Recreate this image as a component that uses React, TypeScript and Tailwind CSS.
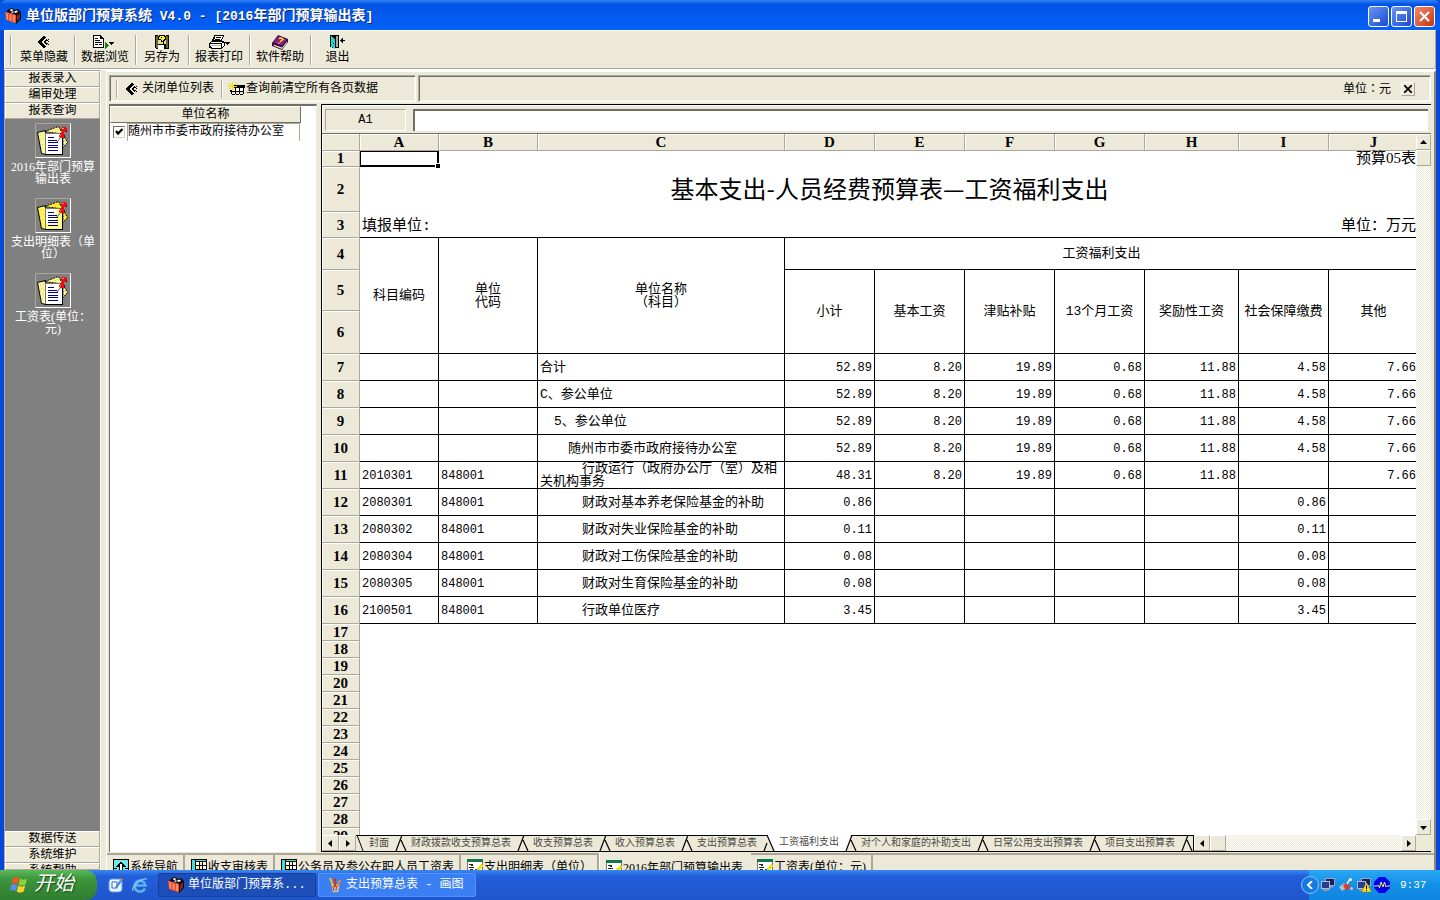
import { ReactNode } from 'react';
import clsx from 'clsx';

type IconProps = { className?: string };

type SheetRow = {
    code: string;
    unit: string;
    name: string;
    indent: string;
    values: string[];
};

const raised =
    'border border-t-white border-l-white border-r-[#aca899] border-b-[#aca899] bg-[#ece9d8]';
const sunken =
    'border border-t-[#aca899] border-l-[#aca899] border-r-white border-b-white';
const track =
    'bg-[repeating-conic-gradient(#ffffff_0_25%,#ece9d8_0_50%)] bg-[size:2px_2px]';
const stripFrame =
    'border border-t-[#aca899] border-l-[#aca899] border-r-white border-b-white shadow-[inset_1px_1px_0_#716f64,inset_-1px_-1px_0_#f6f4ea]';

const full = ['52.89', '8.20', '19.89', '0.68', '11.88', '4.58', '7.66'];

const rows: SheetRow[] = [
    { code: '', unit: '', name: '合计', indent: 'indent-0', values: full },
    { code: '', unit: '', name: 'C、参公单位', indent: 'indent-0', values: full },
    { code: '', unit: '', name: '5、参公单位', indent: 'indent-[14px]', values: full },
    { code: '', unit: '', name: '随州市市委市政府接待办公室', indent: 'indent-[28px]', values: full },
    {
        code: '2010301',
        unit: '848001',
        name: '行政运行（政府办公厅（室）及相关机构事务',
        indent: 'indent-[42px]',
        values: ['48.31', '8.20', '19.89', '0.68', '11.88', '', '7.66'],
    },
    {
        code: '2080301',
        unit: '848001',
        name: '财政对基本养老保险基金的补助',
        indent: 'indent-[42px]',
        values: ['0.86', '', '', '', '', '0.86', ''],
    },
    {
        code: '2080302',
        unit: '848001',
        name: '财政对失业保险基金的补助',
        indent: 'indent-[42px]',
        values: ['0.11', '', '', '', '', '0.11', ''],
    },
    {
        code: '2080304',
        unit: '848001',
        name: '财政对工伤保险基金的补助',
        indent: 'indent-[42px]',
        values: ['0.08', '', '', '', '', '0.08', ''],
    },
    {
        code: '2080305',
        unit: '848001',
        name: '财政对生育保险基金的补助',
        indent: 'indent-[42px]',
        values: ['0.08', '', '', '', '', '0.08', ''],
    },
    {
        code: '2100501',
        unit: '848001',
        name: '行政单位医疗',
        indent: 'indent-[42px]',
        values: ['3.45', '', '', '', '', '3.45', ''],
    },
];

const emptyRows = [17, 18, 19, 20, 21, 22, 23, 24, 25, 26, 27, 28, 29];
const columns = ['A', 'B', 'C', 'D', 'E', 'F', 'G', 'H', 'I', 'J'];
const payHeads = ['小计', '基本工资', '津贴补贴', '13个月工资', '奖励性工资', '社会保障缴费', '其他'];
const sheetTabs = [
    '封面',
    '财政拨款收支预算总表',
    '收支预算总表',
    '收入预算总表',
    '支出预算总表',
    '工资福利支出',
    '对个人和家庭的补助支出',
    '日常公用支出预算表',
    '项目支出预算表',
];
const activeSheet = 5;

/* ---------- icons ---------- */

const BookCaseIcon = ({ className }: IconProps) => (
    <svg viewBox="0 0 16 16" className={className}>
        <path d="M4 1l3-1 3 2 3-1 3 3v7l-5 5-1-1V6L1 4z" fill="#120806" />
        <path d="M4.500 2l2-1 2 1-2 1.200zM9 3.500l3-1 1 1.500-3 1zM6 4l2-.800 1 1-2 .800z" fill="#fff" />
        <path d="M0 3.500l11 3.500v8.500L1 12z" fill="#e4512e" />
        <path d="M1 4.800l2 .700v6.500l-1.500-.500zM4.500 6l2 .700v6.500L4.500 12.500zM8 7l2 .700v6.500l-2-.700z" fill="#ff8a64" />
        <path d="M12 8l3-3v5l-3 4z" fill="#8c2413" />
    </svg>
);

const CollapseIcon = ({ className }: IconProps) => (
    <svg viewBox="0 0 12 12" className={className} shapeRendering="crispEdges">
        <path d="M5 0h2v1h1v1H7v1H6v1H5v1H4v2h1v1h1v1h1v1h1v1H7v1H5v-1H4v-1H3V9H2V8H1V7H0V5h1V4h1V3h1V2h1V1h1z" fill="#000" />
        <path d="M8 3h1v1h1v1H8v2h2v1H9v1H8V8H7V7H6V5h1V4h1zM10 3h1v1h-1zM10 5h1v1h-1zM10 8h1v1h-1z" fill="#000" />
    </svg>
);

const BrowseIcon = ({ className }: IconProps) => (
    <svg viewBox="0 0 24 16" className={className} shapeRendering="crispEdges">
        <path d="M0 1h8v1h1v1h1v1h1v10H0z" fill="#000" />
        <path d="M1 2h6v3h3v8H1z" fill="#fff" />
        <path d="M8 3h1v1H8zM2 4h3v1H2zM2 6h5v1H2zM2 8h7v1H2zM2 10h3v1H2zM6 10h3v1H6z" fill="#000" />
        <path d="M12 8h1v1h1v1h1v1h1v1h-1v1h-1v1h-1v1h-1z" fill="#0a8a12" />
        <path d="M16 8h5v1h-1v1h-1v1h-1v-1h-1V9h-1z" fill="#000" />
    </svg>
);

const SaveAsIcon = ({ className }: IconProps) => (
    <svg viewBox="0 0 14 14" className={className} shapeRendering="crispEdges">
        <path d="M0 0h14v14H1l-1-1z" fill="#000" />
        <path d="M1 1h2v12H1zM11 1h2v12h-2z" fill="#6d6d22" />
        <path d="M3 0h8v9H3z" fill="#d8d8c0" />
        <path d="M4 0h6v1h1v4h-1v1H9v3H6V5h1V4h1V3H6v2H3V1h1z" fill="#000" />
        <path d="M5 1h4v1h1v2H9v1H8v1H7V4h1V3H7V2H6v2H4V2h1z" fill="#ffee00" />
        <path d="M3 10h6v4H3z" fill="#fff" />
        <path d="M6 7h2v2H6z" fill="#ffee00" />
    </svg>
);

const PrinterIcon = ({ className }: IconProps) => (
    <svg viewBox="0 0 21 14" className={className} shapeRendering="crispEdges">
        <path d="M5 0h10v2h-1v2h-1v2H3V4h1V2h1z" fill="#000" />
        <path d="M6 1h8v1h-1v2h-1v1H5V4h1z" fill="#fff" />
        <path d="M7 2h5v1H7zM6 4h5v1H6z" fill="#000" />
        <path d="M2 6h13v1h1v4h-1v1h-1v1h-1v1H2v-1H0V8h1V7h1z" fill="#000" />
        <path d="M3 7h10v1H2V7zM1 9h11v1H1zM13 8h2v3h-1v1h-1zM2 11h10v2H3z" fill="#fff" />
        <path d="M1 10h11v1H1z" fill="#b8b8b0" />
        <path d="M9 10h2v1H9z" fill="#d8c800" />
        <path d="M15 7h6v1h-1v1h-1v1h-1V9h-1V8h-2z" fill="#000" />
    </svg>
);

const BookIcon = ({ className }: IconProps) => (
    <svg viewBox="0 0 16 15" className={className}>
        <path d="M6 0l10 4v3l-6 8-10-4V8z" fill="#30082f" />
        <path d="M6 1l9 3.500-5 6L1 7.500z" fill="#8b1b8b" />
        <path d="M1.500 9.500l8.500 3 5-6v1.500l-5 6-8-3z" fill="#e8dce8" />
        <path d="M7 3.500l2.500-.500 1.500 1.500L9 6 8 7" fill="none" stroke="#ffe800" strokeWidth="1.400" />
        <path d="M6 7.500h1.500v1.200H6z" fill="#ffe800" />
    </svg>
);

const ExitIcon = ({ className }: IconProps) => (
    <svg viewBox="0 0 15 14" className={className} shapeRendering="crispEdges">
        <path d="M0 0h9v13H0z" fill="#000" />
        <path d="M6 1h2v11H6z" fill="#a8a89c" />
        <path d="M1 1h1v1h1v1h1v1h1v10H4v-1H3v-1H1z" fill="#20d4dc" />
        <path d="M0 12h2v2H0z" fill="#ece9d8" />
        <path d="M3 8h1v1H3z" fill="#000" />
        <path d="M10 5h5v1h-5zM11 4h1v3h-1zM12 3h1v5h-1z" fill="#000" />
    </svg>
);

const ClearIcon = ({ className }: IconProps) => (
    <svg viewBox="0 0 17 14" className={className} shapeRendering="crispEdges">
        <path d="M6 3h11v3H6zM2 8h2v1H2zM3 13h13v-1H3zM2 9h14v1H2zM7 6h1v7H7zM11 6h1v7h-1zM15 6h1v7h-1zM3 8h1v5H3z" fill="#000" />
        <path d="M8 6h3v3H8zM12 6h3v3h-3z" fill="#fff" />
        <path d="M4 0h1v3H4zM0 1h1v1H0zM1 2h2v1H1zM3 3h3v2H3zM6 2h2v1H6zM8 1h1v1H8zM0 4h3v1H0zM6 4h3v1H6zM4 5h1v3H4zM1 6h2v1H1z" fill="#e8e000" />
    </svg>
);

const NotesIcon = ({ yellow, className }: IconProps & { yellow?: boolean }) => (
    <svg viewBox="0 0 32 30" className={className}>
        <path d="M.500 6.500l8-2 1 24-5-1z" fill={yellow ? '#fff45a' : '#fbf6a6'} stroke="#000" />
        <path d="M7.500 5.500l14-5 9 16-4.500 5V8z" fill={yellow ? '#ffee30' : '#fbf6a6'} stroke="#000" strokeDasharray="2 1" />
        <path
            d="M3 9h1v1H3zM4 12h1v1H4zM3 15h1v1H3zM5 18h1v1H5zM5 22h1v1H5zM12 5h1v1h-1zM15 3h1v1h-1zM18 4h1v1h-1zM27 14h1v1h-1zM20 3h1v1h-1zM6 8h1v1H6zM6 13h1v1H6z"
            fill="#e6d800"
        />
        <path d="M8 7h18v22H8z" fill="#000" />
        <path d="M8 7h17v21H8z" fill="#777" />
        <path d="M9 8h16v20H9z" fill={yellow ? '#ffff8c' : '#fff'} />
        <path d="M9 8h10v14H9z" fill="#fff" />
        <path d="M11 11h6v1h-6zM11 14h9v1h-9zM11 16h10v1H11zM11 19h10v1H11zM11 21h10v1H11zM11 24h10v1H11z" fill="#00008c" shapeRendering="crispEdges" />
        <path d="M20 16l4-5" stroke="#555" />
        <path d="M25 1h4v1h1v3h-1v1h-2v3h1v2h-1v1h-4v-1h-1V9h1V7h2V5h-1V2h1z" fill="#e81010" shapeRendering="crispEdges" />
        <path d="M25 2h2v1h-2zM23 9h1v1h-1z" fill="#ff9a9a" />
        <path d="M29 4h1v2h-1zM27 9h1v2h-1z" fill="#7a0000" />
    </svg>
);

const NavDocIcon = ({ className }: IconProps) => (
    <svg viewBox="0 0 16 12" className={className} shapeRendering="crispEdges">
        <path d="M0 0h16v12H0z" fill="#000" />
        <path d="M1 1h14v11H1z" fill="#6fe8ea" />
        <path d="M8 3h1v1h1v1h1v1h1v1h1v1h-3v4H6V8H3V7h1V6h1V5h1V4h1V3z" fill="#000" />
        <path d="M7 5h2v7H7z" fill="#fff" />
        <path d="M1 9h3v1H1zM12 9h3v1h-3z" fill="#000" />
    </svg>
);

const GridDocIcon = ({ className }: IconProps) => (
    <svg viewBox="0 0 16 12" className={className} shapeRendering="crispEdges">
        <path d="M0 0h16v12H0z" fill="#000" />
        <path d="M1 1h3v11H1zM5 1h10v1H5z" fill="#3fe0e4" />
        <path d="M5 3h3v3H5zM9 3h2v3H9zM12 3h3v3h-3zM5 7h3v3H5zM9 7h2v3H9zM12 7h3v3h-3z" fill="#fff" />
        <path d="M9 3h2v3H9zM5 7h3v3H5z" fill="#ffee88" />
    </svg>
);

const FormDocIcon = ({ className }: IconProps) => (
    <svg viewBox="0 0 16 12" className={className} shapeRendering="crispEdges">
        <path d="M0 0h16v12H0z" fill="#777" />
        <path d="M1 3h14v9H1z" fill="#fff" />
        <path d="M0 0h16v3H0z" fill="#12784c" />
        <path d="M2 5h4v1H2zM4 6h2v1H4zM2 8h5v1H2zM3 10h3v1H3z" fill="#222" />
        <path d="M9 11l5-6 2 2-4 5z" fill="#f2e400" />
        <path d="M8 10h2v2H8z" fill="#2255dd" />
    </svg>
);

const WindowsFlag = ({ className }: IconProps) => (
    <svg viewBox="0 0 20 18" className={className}>
        <path d="M3 2c2-1.500 4-1.500 6 0L7.500 8c-2-1.500-4-1.500-6 0z" fill="#f0562a" />
        <path d="M10 2.500c2 1.500 4.500 1.500 7 0L15.500 8.500c-2.500 1.500-5 1.500-7 0z" fill="#8fd03c" />
        <path d="M1.300 9c2-1.500 4-1.500 6 0L5.800 15c-2-1.500-4-1.500-6 0z" fill="#5b8df0" />
        <path d="M8.200 9.500c2 1.500 4.500 1.500 7 0l-1.500 6c-2.500 1.500-5 1.500-7 0z" fill="#fbd22e" />
    </svg>
);

const ShowDesktopIcon = ({ className }: IconProps) => (
    <svg viewBox="0 0 16 16" className={className}>
        <rect x="1" y="2" width="13" height="13" rx="3" fill="#e9f3fd" stroke="#5ba0e8" />
        <path d="M4 5h5v6H4z" fill="#fff" stroke="#2a6cc8" />
        <path d="M7 10l5-7 2 1-5 7z" fill="#3d8be8" />
        <path d="M12 3l1-2 2 1-1 2z" fill="#f07828" />
    </svg>
);

const IeIcon = ({ className }: IconProps) => (
    <svg viewBox="0 0 16 16" className={className}>
        <path d="M13 11.500A5.500 5.500 0 1 1 13.500 8.500H4" fill="none" stroke="#5ab4f4" strokeWidth="2.600" />
        <path d="M1 14C-1 11 8 1 15 2" fill="none" stroke="#8ccaf8" strokeWidth="1.200" />
    </svg>
);

const PaintIcon = ({ className }: IconProps) => (
    <svg viewBox="0 0 14 16" className={className}>
        <path d="M3 7h9l-1.500 8.500h-6z" fill="#b9c6d4" stroke="#5c6c80" strokeWidth="0.500" />
        <path d="M5 9l-3-8" stroke="#f0c030" strokeWidth="2" />
        <path d="M7 10L7 1" stroke="#c83820" strokeWidth="2" />
        <path d="M9 10l3-7" stroke="#e88428" strokeWidth="2" />
        <path d="M5 9l1 5M8.500 9L8 14" stroke="#c83820" />
    </svg>
);

const MonitorsIcon = ({ warn, className }: IconProps & { warn?: boolean }) => (
    <svg viewBox="0 0 16 16" className={className}>
        <rect x="5.500" y="1.500" width="9" height="7" fill="#16205c" stroke="#9aa4c4" />
        <rect x="1.500" y="4.500" width="8" height="7" fill="#2c3c90" stroke="#b4bcd4" />
        <path d="M3 12h6v2H3zM10 9h3v2h-3z" fill="#8c94b0" />
        {warn && (
            <>
                <path d="M10.500 5.500l5 9.500h-10z" fill="#ffdf1c" stroke="#8a7000" strokeWidth="0.500" />
                <path d="M10 8.500h1v3.500h-1zM10 13h1v1h-1z" fill="#000" />
            </>
        )}
    </svg>
);

const SatelliteIcon = ({ className }: IconProps) => (
    <svg viewBox="0 0 16 16" className={className}>
        <path d="M1 10l5-4 3 5-5 3z" fill="#b8bcc8" />
        <path d="M5 8l5-2 2 4-4 4z" fill="#d8402c" />
        <path d="M9 7l3-5" stroke="#eee" strokeWidth="1.500" />
        <circle cx="12.500" cy="2.500" r="1.500" fill="#fff" />
        <circle cx="13.500" cy="11.500" r="1.500" fill="#ffb0a0" />
    </svg>
);

const WaveIcon = ({ className }: IconProps) => (
    <svg viewBox="0 0 16 16" className={className}>
        <path d="M5 0h6l5 5v6l-5 5H5l-5-5V5z" fill="#0000f0" />
        <path d="M0 9h3.500l1-1 1 3 1.500-6 2 5 1.500-5 1.500 5 1-1H16" fill="none" stroke="#f0f060" />
    </svg>
);

const Arrow = ({ dir }: { dir: 'left' | 'right' | 'up' | 'down' }) => {
    const paths = {
        left: 'M6 1v7L2 4.500z',
        right: 'M3 1v7l4-3.500z',
        up: 'M1 6h7L4.500 2z',
        down: 'M1 3h7L4.500 7z',
    };
    return (
        <svg viewBox="0 0 9 9" className="h-[9px] w-[9px]">
            <path d={paths[dir]} fill="#000" />
        </svg>
    );
};

/* ---------- chrome ---------- */

const ScrollButton = ({ dir, className }: { dir: 'left' | 'right' | 'up' | 'down'; className: string }) => (
    <button
        type="button"
        aria-label={dir}
        className={clsx('flex shrink-0 items-center justify-center', raised, className)}
    >
        <Arrow dir={dir} />
    </button>
);

const TitleBar = () => (
    <header className="flex h-[30px] shrink-0 items-center justify-between rounded-t-md bg-linear-to-b from-[#2f80f8] via-[#0054e3] via-15% to-[#0560f8] pr-[5px] pl-[5px]">
        <div className="flex items-center gap-[5px] pt-[2px]">
            <BookCaseIcon className="h-4 w-4" />
            <h1 className="text-sm leading-4 font-bold whitespace-pre text-white [text-shadow:1px_1px_0_#0a2a80]">
                单位版部门预算系统<span className="text-[13px]"> V4.0 - [2016</span>年部门预算输出表<span className="text-[13px]">]</span>
            </h1>
        </div>
        <div className="flex gap-[2px] pt-[3px]">
            <button type="button" aria-label="最小化" className="flex h-[21px] w-[21px] items-end rounded-[3px] border border-white bg-linear-to-br from-[#6b94f4] to-[#1c48d0] p-1">
                <span className="h-[3px] w-[7px] bg-white" />
            </button>
            <button type="button" aria-label="最大化" className="flex h-[21px] w-[21px] items-center justify-center rounded-[3px] border border-white bg-linear-to-br from-[#6b94f4] to-[#1c48d0]">
                <span className="h-[11px] w-[11px] border border-t-[3px] border-white" />
            </button>
            <button type="button" aria-label="关闭" className="flex h-[21px] w-[21px] items-center justify-center rounded-[3px] border border-white bg-linear-to-br from-[#f08868] to-[#c83008]">
                <svg viewBox="0 0 11 11" className="h-[11px] w-[11px]">
                    <path d="M1 1l9 9M10 1l-9 9" stroke="#fff" strokeWidth="2.200" />
                </svg>
            </button>
        </div>
    </header>
);

const ToolButton = ({ icon, label, width, last }: { icon: ReactNode; label: string; width: string; last?: boolean }) => (
    <button
        type="button"
        className={clsx('flex h-[30px] flex-col items-center justify-between', width, !last && 'border-r border-[#aca899] shadow-[1px_0_0_#fff]')}
    >
        <span className="flex h-[15px] items-center">{icon}</span>
        <span className="leading-[14px]">{label}</span>
    </button>
);

const Toolbar = () => (
    <div className="flex h-[39px] shrink-0 items-center border border-t-white border-r-[#aca899] border-b-[#aca899] border-l-white pl-[5px]">
        <div className="mr-[2px] h-[30px] w-[2px] border-l border-[#aca899] bg-white" />
        <ToolButton width="w-[61px]" label="菜单隐藏" icon={<CollapseIcon className="h-3 w-3" />} />
        <ToolButton width="w-[61px]" label="数据浏览" icon={<BrowseIcon className="h-4 w-6" />} />
        <ToolButton width="w-[53px]" label="另存为" icon={<SaveAsIcon className="h-[14px] w-[14px]" />} />
        <ToolButton width="w-[61px]" label="报表打印" icon={<PrinterIcon className="h-[14px] w-[21px]" />} />
        <ToolButton width="w-[61px]" label="软件帮助" icon={<BookIcon className="h-[15px] w-4" />} />
        <ToolButton width="w-[53px]" label="退出" last icon={<ExitIcon className="h-[14px] w-[15px]" />} />
    </div>
);

const SideHeader = ({ label, className }: { label: string; className?: string }) => (
    <button type="button" className={clsx('block w-full shrink-0 overflow-hidden text-center leading-[15px]', raised, className ?? 'h-4')}>
        {label}
    </button>
);

const SideItem = ({ lines, yellow }: { lines: string[]; yellow?: boolean }) => (
    <button type="button" className="flex h-[75px] w-full shrink-0 flex-col items-center gap-[3px] pl-px text-white">
        <span className={clsx('flex h-[35px] w-9 items-center justify-center', sunken)}>
            <NotesIcon yellow={yellow} className="h-[30px] w-8" />
        </span>
        <span className="font-['Liberation_Serif','Noto_Sans_CJK_SC',serif] leading-3">
            {lines.map((line) => (
                <span key={line} className="block whitespace-nowrap">{line}</span>
            ))}
        </span>
    </button>
);

const Sidebar = () => (
    <nav className="flex w-[97px] shrink-0 flex-col border-t border-r border-l border-t-[#aca899] border-r-white border-l-[#aca899] bg-[#808080]">
        <SideHeader label="报表录入" />
        <SideHeader label="编审处理" />
        <SideHeader label="报表查询" />
        <div className="flex min-h-0 flex-1 flex-col overflow-hidden pt-1">
            <SideItem lines={['2016年部门预算', '输出表']} />
            <SideItem lines={['支出明细表（单', '位）']} yellow />
            <SideItem lines={['工资表(单位：', '元)']} />
        </div>
        <SideHeader label="数据传送" />
        <SideHeader label="系统维护" />
        <SideHeader label="系统帮助" className="h-[7px]" />
    </nav>
);

const FilterStrip = () => (
    <div className="flex h-[27px] shrink-0 gap-[2px]">
        <div className={clsx('flex w-[307px] items-center pl-[6px]', stripFrame)}>
            <div className="h-[18px] w-[2px] border-l border-[#aca899] bg-white" />
            <button type="button" className="flex h-[18px] items-center gap-1 border-r border-[#aca899] pr-[7px] pl-2 shadow-[1px_0_0_#fff]">
                <CollapseIcon className="h-3 w-3" />
                关闭单位列表
            </button>
            <button type="button" className="flex h-[18px] items-center gap-px pl-[6px]">
                <ClearIcon className="h-[14px] w-[17px]" />
                查询前清空所有各页数据
            </button>
        </div>
        <div className={clsx('flex flex-1 items-center justify-end gap-[10px] pt-px pr-[15px]', stripFrame)}>
            <span>单位<span className="font-['Noto_Sans_CJK_TC',sans-serif]">：</span>元</span>
            <button type="button" aria-label="关闭" className={clsx('flex h-[14px] w-[14px] items-center justify-center', raised)}>
                <svg viewBox="0 0 8 8" className="h-2 w-2">
                    <path d="M0 0l8 8M8 0L0 8" stroke="#000" strokeWidth="1.800" />
                </svg>
            </button>
        </div>
    </div>
);

const UnitList = () => (
    <section className="w-[208px] shrink-0 border-t-2 border-r border-l border-t-[#716f64] border-r-[#ece9d8] border-l-[#716f64] bg-white">
        <div className="mr-[15px] h-[17px] border border-t-white border-r-[#716f64] border-b-[#716f64] border-l-white bg-[#ece9d8] text-center leading-4">
            单位名称
        </div>
        <div className="flex items-start pl-[3px]">
            <span className="relative mt-[3px] h-3 w-3">
                <input
                    id="unit-848001"
                    type="checkbox"
                    defaultChecked
                    className="peer block h-3 w-3 appearance-none border border-t-[#716f64] border-r-[#d8d4c4] border-b-[#d8d4c4] border-l-[#716f64] bg-white"
                />
                <svg viewBox="0 0 12 12" className="pointer-events-none absolute inset-0 hidden h-3 w-3 peer-checked:block">
                    <path d="M3 5l2 2.500L9.500 3" fill="none" stroke="#000" strokeWidth="2.200" />
                </svg>
            </span>
            <label htmlFor="unit-848001" className="mr-4 ml-[2px] h-[18px] flex-1 border-t border-r border-l border-[#aca899] leading-[17px]">
                随州市市委市政府接待办公室
            </label>
        </div>
    </section>
);

const rowHead =
    'border-r border-b border-[#aca899] bg-[#ece9d8] p-0 text-center font-bold font-[\'Liberation_Serif\',serif] text-[15px] leading-4 shadow-[inset_1px_1px_0_#fff]';
const cell = 'overflow-hidden border-r border-b border-black p-0';

const Spreadsheet = () => (
    <table className="w-[1097px] table-fixed border-separate border-spacing-0 text-[13px] leading-[13px]">
        <colgroup>
            <col className="w-[38px]" />
            <col className="w-[79px]" />
            <col className="w-[99px]" />
            <col className="w-[247px]" />
            <col className="w-[90px]" />
            <col className="w-[90px]" />
            <col className="w-[90px]" />
            <col className="w-[90px]" />
            <col className="w-[94px]" />
            <col className="w-[90px]" />
            <col className="w-[90px]" />
        </colgroup>
        <thead>
            <tr className="h-[17px]">
                <th className={rowHead} />
                {columns.map((c) => (
                    <th key={c} scope="col" className={rowHead}>{c}</th>
                ))}
            </tr>
        </thead>
        <tbody>
            <tr className="h-4">
                <th scope="row" className={clsx(rowHead, 'leading-[15px]')}>1</th>
                <td className="relative border-t border-r-2 border-b-2 border-l border-black p-0">
                    <span className="absolute -right-[3px] -bottom-[3px] h-[5px] w-[5px] border-t border-l border-white bg-black" />
                </td>
                <td colSpan={9} className="p-0 pr-[3px] text-right text-[15px] leading-[15px]">预算<span className="font-['Liberation_Serif',serif]">05</span>表</td>
            </tr>
            <tr className="h-[45px]">
                <th scope="row" className={rowHead}>2</th>
                <td colSpan={10} className="p-0 pb-1 text-center font-['Noto_Sans_CJK_SC',sans-serif] text-2xl leading-6">
                    基本支出-人员经费预算表—工资福利支出
                </td>
            </tr>
            <tr className="h-[26px] text-[15px] leading-[15px]">
                <th scope="row" className={rowHead}>3</th>
                <td colSpan={2} className="border-b border-black p-0 pt-[3px] pl-[2px]">填报单位:</td>
                <td colSpan={8} className="border-b border-black p-0 pt-[3px] pr-[3px] text-right">单位：万元</td>
            </tr>
            <tr className="h-8 text-center">
                <th scope="row" className={rowHead}>4</th>
                <td rowSpan={3} className={cell}>科目编码</td>
                <td rowSpan={3} className={cell}>单位<br />代码</td>
                <td rowSpan={3} className={cell}>单位名称<br />（科目）</td>
                <td colSpan={7} className={cell}>工资福利支出</td>
            </tr>
            <tr className="h-[41px] text-center">
                <th scope="row" className={rowHead}>5</th>
                {payHeads.map((head) => (
                    <td key={head} rowSpan={2} className={clsx(cell, 'whitespace-nowrap')}>{head}</td>
                ))}
            </tr>
            <tr className="h-[43px]">
                <th scope="row" className={rowHead}>6</th>
            </tr>
            {rows.map((row, i) => (
                <tr key={row.name} className="h-[27px]">
                    <th scope="row" className={rowHead}>{i + 7}</th>
                    <td className={clsx(cell, 'pt-[2px] pl-[2px] text-xs')}>{row.code}</td>
                    <td className={clsx(cell, 'pt-[2px] pl-[2px] text-xs')}>{row.unit}</td>
                    <td className={clsx(cell, 'pl-[2px]', row.indent)}>{row.name}</td>
                    {row.values.map((value, j) => (
                        <td key={j} className={clsx(cell, 'pt-[2px] pr-[2px] text-right text-xs')}>{value}</td>
                    ))}
                </tr>
            ))}
            {emptyRows.map((n) => (
                <tr key={n} className="h-[17px]">
                    <th scope="row" className={rowHead}>{n}</th>
                    <td colSpan={10} className="p-0" />
                </tr>
            ))}
        </tbody>
    </table>
);

// Edge shared by two neighbouring sheet tabs; `side` tells which one is in front.
const TabEdge = ({ side }: { side: 'none' | 'left' | 'right' }) => (
    <svg viewBox="0 0 22 16" className="h-4 w-[22px] shrink-0">
        {side === 'right' && <path d="M10 0h12v16h-5z" fill="#fff" />}
        {side === 'left' && <path d="M0 0h13L7 16H0z" fill="#fff" />}
        {side !== 'left' && <path d={side === 'right' ? 'M0 .500h10' : 'M0 .500h22'} stroke="#000" />}
        {side === 'left' && <path d="M12 .500h10" stroke="#000" />}
        <path
            d={side === 'right' ? 'M10 0l7 16M7 16l3-8' : 'M13 0L7 16M12 5l5 11'}
            fill="none"
            stroke="#000"
            strokeWidth="1.200"
        />
    </svg>
);

const SheetTabs = () => (
    <div className="flex h-4 shrink-0 bg-[#ece9d8]">
        <ScrollButton dir="left" className="w-[17px]" />
        <ScrollButton dir="right" className="w-[17px]" />
        <div className="flex min-w-0 flex-1 overflow-hidden text-[10px] text-[#4a4a44]">
            <svg viewBox="0 0 13 16" className="h-4 w-[13px] shrink-0">
                <path d="M0 .500h13M1 0l6 16" fill="none" stroke="#000" />
            </svg>
            {sheetTabs.map((tab, i) => (
                <div key={tab} className="flex shrink-0">
                    <button
                        type="button"
                        className={clsx(
                            'h-4 leading-4 whitespace-nowrap',
                            i === activeSheet ? 'bg-white' : 'border-t border-black',
                        )}
                    >
                        {tab}
                    </button>
                    <TabEdge side={i === activeSheet ? 'left' : i + 1 === activeSheet ? 'right' : 'none'} />
                </div>
            ))}
        </div>
        <div className={clsx('flex w-[223px] shrink-0 border-l border-black', track)}>
            <ScrollButton dir="left" className="w-4" />
            <div className={clsx('w-4', raised)} />
            <div className="flex-1" />
            <ScrollButton dir="right" className="w-[15px]" />
        </div>
        <div className="w-[15px] shrink-0" />
    </div>
);

const SheetPanel = () => (
    <section className="flex min-w-0 flex-1 flex-col border-t border-b border-l border-black">
        <div className="flex h-7 shrink-0 items-center gap-[7px] border-t border-l border-white pr-[3px] pl-[2px]">
            <div className={clsx('h-[22px] w-[81px] text-center text-xs leading-5', sunken)}>A1</div>
            <input
                aria-label="A1"
                className="h-[22px] min-w-0 flex-1 border-t-2 border-l-2 border-[#716f64] border-r-[#ece9d8] bg-white px-1 outline-none"
            />
        </div>
        <div className="flex min-h-0 flex-1 border-t border-[#716f64]">
            <div className="min-w-0 flex-1 overflow-hidden bg-white">
                <Spreadsheet />
            </div>
            <div className={clsx('flex w-[15px] shrink-0 flex-col', track)}>
                <ScrollButton dir="up" className="h-4" />
                <div className={clsx('h-4', raised)} />
                <div className="flex-1" />
                <ScrollButton dir="down" className="h-4" />
            </div>
        </div>
        <SheetTabs />
    </section>
);

const DocTab = ({ icon, label, active }: { icon: ReactNode; label: string; active?: boolean }) => (
    <button
        type="button"
        className={clsx(
            'flex h-[17px] shrink-0 items-start gap-px overflow-hidden pl-[6px] whitespace-nowrap',
            active ? 'border-l border-white pt-[7px] pr-2' : 'border-t-2 border-r-2 border-t-[#aca899] border-r-[#aca899] pt-[4px] pr-[5px]',
        )}
    >
        {icon}
        <span className="font-['Liberation_Serif','Noto_Sans_CJK_SC',serif] leading-4">{label}</span>
    </button>
);

const DocTabs = () => (
    <div className="mt-px flex h-[17px] shrink-0 overflow-hidden">
        <DocTab label="系统导航" icon={<NavDocIcon className="h-3 w-4" />} />
        <DocTab label="收支审核表" icon={<GridDocIcon className="h-3 w-4" />} />
        <DocTab label="公务员及参公在职人员工资表" icon={<GridDocIcon className="h-3 w-4" />} />
        <DocTab label="支出明细表（单位）" icon={<FormDocIcon className="h-3 w-4" />} />
        <DocTab label="2016年部门预算输出表" active icon={<FormDocIcon className="h-3 w-4" />} />
        <DocTab label="工资表(单位：元)" icon={<FormDocIcon className="h-3 w-4" />} />
        <div className="flex-1 border-t-2 border-[#aca899]" />
    </div>
);

const Taskbar = () => (
    <footer className="flex h-[30px] shrink-0 items-stretch bg-linear-to-b from-[#3a8af0] via-[#245edb] via-20% to-[#1f55cc] text-white">
        <button
            type="button"
            className="flex w-[97px] items-center gap-1 rounded-r-xl bg-linear-to-b from-[#5cb85c] via-[#3c963c] via-30% to-[#2f7d2f] pl-[10px] text-xl leading-6 italic [text-shadow:1px_1px_1px_#1c4a1c]"
        >
            <WindowsFlag className="h-[18px] w-5" />
            开始
        </button>
        <div className="flex items-center gap-2 pr-[10px] pl-[11px]">
            <ShowDesktopIcon className="h-4 w-4" />
            <IeIcon className="h-4 w-4" />
        </div>
        <div className="flex items-center gap-[2px]">
            <button type="button" className="flex h-6 w-[158px] items-center gap-1 rounded-xs border border-[#163f9c] bg-[#1d4eb8] pl-[9px]">
                <BookCaseIcon className="h-4 w-4" />
                <span>单位版部门预算系...</span>
            </button>
            <button type="button" className="flex h-6 w-[158px] items-center gap-1 rounded-xs border border-[#4f94ff] bg-[#3a80f4] pl-[9px]">
                <PaintIcon className="h-4 w-[14px]" />
                <span>支出预算总表 - 画图</span>
            </button>
        </div>
        <div className="flex-1" />
        <div className="flex w-[131px] items-center bg-linear-to-b from-[#2aa6f4] via-[#1290e8] to-[#0f86e0]">
            <button type="button" aria-label="显示隐藏的图标" className="-ml-2 flex h-[18px] w-[18px] items-center justify-center rounded-full border border-[#7cc8ff] bg-[#1a78e4]">
                <svg viewBox="0 0 8 8" className="h-2 w-2">
                    <path d="M6 0L2 4l4 4" fill="none" stroke="#fff" strokeWidth="2" />
                </svg>
            </button>
            <div className="flex items-center gap-[2px] pl-px">
                <MonitorsIcon className="h-4 w-4" />
                <SatelliteIcon className="h-4 w-4" />
                <MonitorsIcon warn className="h-4 w-4" />
                <WaveIcon className="h-4 w-4" />
            </div>
            <time className="pl-[10px] font-['Liberation_Mono',monospace] text-[11px]">9:37</time>
        </div>
    </footer>
);

const App = () => {
    return (
        <div className="flex h-screen flex-col overflow-hidden bg-[#0a4ad8] font-['Liberation_Mono','Noto_Sans_CJK_SC',monospace] text-xs text-black">
            <TitleBar />
            <main className="flex min-h-0 flex-1 flex-col border-x-4 border-[#0848d8] bg-[#ece9d8]">
                <Toolbar />
                <div className="flex min-h-0 flex-1 gap-[5px] border-t border-white">
                    <Sidebar />
                    <div className="flex min-w-0 flex-1 flex-col border-t-2 border-r-2 border-l border-t-white border-r-[#8a887c] border-l-white">
                        <div className="flex min-h-0 flex-1 flex-col gap-[2px] pt-[3px] pr-[3px] pl-[2px]">
                            <FilterStrip />
                            <div className="flex min-h-0 flex-1 gap-1">
                                <UnitList />
                                <SheetPanel />
                            </div>
                        </div>
                        <DocTabs />
                    </div>
                </div>
            </main>
            <Taskbar />
        </div>
    );
};

export default App;
